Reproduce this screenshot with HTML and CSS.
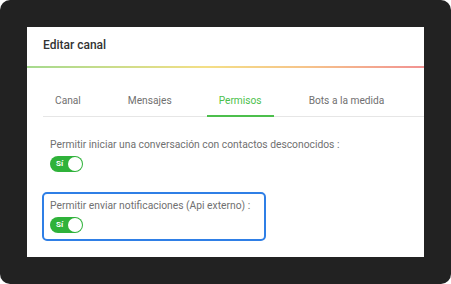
FILE: index.html
```html
<!DOCTYPE html>
<html lang="es">
<head>
  <meta charset="UTF-8" />
  <meta name="viewport" content="width=device-width, initial-scale=1.0"/>
  <title>Editar canal</title>
  <link rel="stylesheet" href="styles.css">
</head>
<body>

  <div class="frame">
    <div class="dialog">
      <div class="dialog-header">Editar canal</div>
      <div class="rainbow"></div>

      <div class="tabs">
        <div class="tab">Canal</div>
        <div class="tab">Mensajes</div>
        <div class="tab active">Permisos</div>
        <div class="tab">Bots a la medida</div>
      </div>

      <div class="options">
        <div class="option">
          <div class="option-label">Permitir iniciar una conversación con contactos desconocidos :</div>
          <div class="switch"><span>Sí</span><i class="knob"></i></div>
        </div>
        <div class="option highlight">
          <div class="option-label">Permitir enviar notificaciones (Api externo) :</div>
          <div class="switch"><span>Sí</span><i class="knob"></i></div>
        </div>
      </div>
    </div>
  </div>

</body>
</html>
```

FILE: styles.css
```css
body {
  margin: 0;
  background-color: #fff;
  font-family: Roboto, 'Liberation Sans', sans-serif;
}

.frame {
  height: 284px;
  box-sizing: border-box;
  padding: 27px;
  background-color: #222;
  border-radius: 10px;
}

.dialog {
  height: 230px;
  background-color: #fff;
}

.dialog-header {
  height: 39px;
  line-height: 36px;
  padding-left: 16px;
  font-size: 12px;
  font-weight: 500;
  color: #333;
}

.rainbow {
  height: 2px;
  background: linear-gradient(90deg, #a5da8e, #f4df86 45%, #f6c48a 70%, #f29292);
}

.tabs {
  display: flex;
  gap: 23px;
  margin: 17px 0 0 16px;
  border-bottom: 1px solid #e6e6e6;
}

.tab {
  height: 32px;
  line-height: 32px;
  padding: 0 12px;
  font-size: 10.2px;
  color: #707070;
  margin-bottom: -1px;
  border-bottom: 2px solid transparent;
  box-sizing: border-box;
}

.tab.active {
  color: #4cbf4c;
  border-bottom-color: #4cbf4c;
}

.options {
  display: flex;
  flex-direction: column;
  align-items: flex-start;
  gap: 12px;
  padding: 14px 0 0 15px;
}

.option {
  padding: 5px 6px 6px;
  border: 2px solid transparent;
  border-radius: 5px;
}

.option.highlight {
  width: 224px;
  box-sizing: border-box;
  border-color: #2f7fe6;
}

.option-label {
  font-size: 10.3px;
  line-height: 14px;
  color: #707070;
}

.switch {
  position: relative;
  width: 33px;
  height: 16px;
  margin-top: 4px;
  border-radius: 8px;
  background-color: #2fb23a;
}

.switch span {
  position: absolute;
  left: 6px;
  top: 0;
  line-height: 16px;
  font-size: 8px;
  font-weight: bold;
  color: #fff;
}

.knob {
  position: absolute;
  right: 1px;
  top: 1px;
  width: 14px;
  height: 14px;
  border-radius: 50%;
  background-color: #fff;
}
```
